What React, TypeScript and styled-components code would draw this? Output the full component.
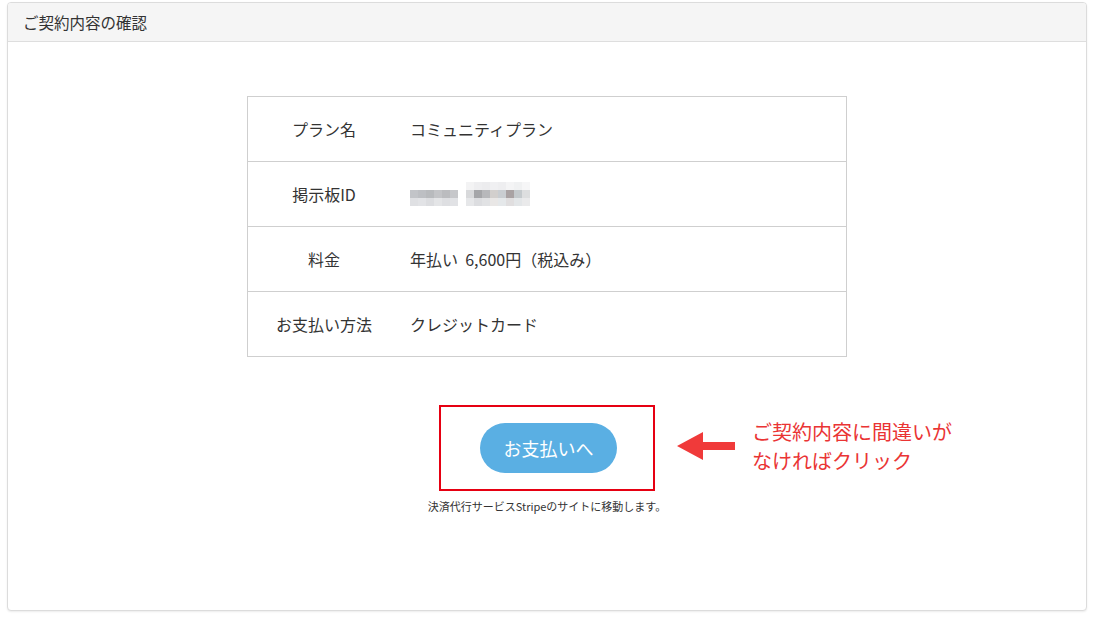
import styled, { createGlobalStyle } from "styled-components";

const GlobalStyle = createGlobalStyle`
  html, body {
    margin: 0;
    padding: 0;
    background: #fff;
  }
  body {
    font-family: "Noto Sans CJK JP", "Noto Sans", sans-serif;
    color: #333;
  }
`;

const rows = [
  { label: "プラン名", value: "コミュニティプラン" },
  { label: "掲示板ID", value: null },
  { label: "料金", value: "年払い\u00a0 6,600円（税込み）" },
  { label: "お支払い方法", value: "クレジットカード" },
];

// blurred board id, mosaic cells (8px each)
const mosaicA = [
  ["#c2c4c8", "#bdbfc3", "#b8babd", "#c3c4c7", "#bbbcbf", "#c6c7ca"],
  ["#dfe0e3", "#e2e3e6", "#dcdde0", "#e4e5e7", "#dedfe2", "#e1e2e5"],
];
const mosaicB = [
  ["#f3f3f4", "#eeeef0", "#ececee", "#f0f0f2", "#eeeef0", "#f4f4f5", "#f0f1f2", "#f6f6f7"],
  ["#d8d9db", "#a5a6a9", "#b7b8bb", "#d2cfcd", "#c9cdd1", "#a9a2a3", "#c4c9cc", "#dddedf"],
  ["#e6e7e9", "#dcdde0", "#e1e2e4", "#e9e7e6", "#e5e8ea", "#e0dedf", "#e3e6e8", "#eaeaeb"],
];

const Mosaic = () => (
  <svg width="124" height="24" viewBox="0 0 124 24">
    {mosaicA.map((r, y) =>
      r.map((c, x) => (
        <rect key={`a${x}-${y}`} x={x * 8} y={8 + y * 8} width="8" height="8" fill={c} />
      ))
    )}
    {mosaicB.map((r, y) =>
      r.map((c, x) => (
        <rect key={`b${x}-${y}`} x={56 + x * 8} y={y * 8} width="8" height="8" fill={c} />
      ))
    )}
  </svg>
);

const App = () => {
  return (
    <Page>
      <GlobalStyle />
      <Card>
        <CardHeader>ご契約内容の確認</CardHeader>
        <CardBody>
          <InfoTable>
            <tbody>
              {rows.map((r) => (
                <tr key={r.label}>
                  <LabelCell>{r.label}</LabelCell>
                  <ValueCell>{r.value ?? <Mosaic />}</ValueCell>
                </tr>
              ))}
            </tbody>
          </InfoTable>
          <ActionArea>
            <Highlight>
              <PayButton>お支払いへ</PayButton>
              <Annotation>
                <svg width="58" height="28" viewBox="0 0 58 28">
                  <polygon points="0,14 26,0 26,10 58,10 58,18 26,18 26,28" fill="#f03a3a" />
                </svg>
                <AnnotationText>
                  ご契約内容に間違いが
                  <br />
                  なければクリック
                </AnnotationText>
              </Annotation>
            </Highlight>
            <Note>決済代行サービスStripeのサイトに移動します。</Note>
          </ActionArea>
        </CardBody>
      </Card>
    </Page>
  );
};

const Page = styled.div`
  padding: 2px 13px 11px 7px;
`;

const Card = styled.div`
  height: 609px;
  box-sizing: border-box;
  display: flex;
  flex-direction: column;
  border: 1px solid #dcdcdc;
  border-radius: 4px;
  background: #fff;
  box-shadow: 0 1px 2px rgba(0, 0, 0, 0.08);
  overflow: hidden;
`;

const CardHeader = styled.div`
  height: 38px;
  line-height: 38px;
  padding-left: 15px;
  background: #f5f5f5;
  border-bottom: 1px solid #dedede;
  font-size: 15.5px;
  color: #333;
`;

const CardBody = styled.div`
  flex: 1;
  display: flex;
  flex-direction: column;
  align-items: center;
  padding-top: 54px;
`;

const InfoTable = styled.table`
  width: 600px;
  border-collapse: collapse;
  border: 1px solid #cfcfcf;
  td {
    border-top: 1px solid #cfcfcf;
    padding-top: 0;
    padding-bottom: 0;
    height: 64px;
    font-size: 16px;
    line-height: 20px;
    color: #333;
  }
`;

const LabelCell = styled.td`
  width: 150px;
  text-align: center;
`;

const ValueCell = styled.td`
  padding-left: 10px;
  svg {
    display: block;
  }
`;

const ActionArea = styled.div`
  display: flex;
  flex-direction: column;
  align-items: center;
  margin-top: 48px;
`;

const Highlight = styled.div`
  position: relative;
  width: 209px;
  height: 82px;
  border: 2px solid #e60012;
  display: flex;
  align-items: center;
  justify-content: center;
  padding-left: 3px;
  box-sizing: content-box;
`;

const PayButton = styled.button`
  width: 137px;
  height: 50px;
  border: none;
  border-radius: 25px;
  background: #5aafe3;
  color: #fff;
  font-family: inherit;
  font-size: 18px;
  cursor: pointer;
`;

const Annotation = styled.div`
  position: absolute;
  left: calc(100% + 24px);
  top: 10px;
  display: flex;
  align-items: center;
  gap: 17px;
  white-space: nowrap;
`;

const AnnotationText = styled.div`
  font-size: 20px;
  line-height: 29px;
  color: #ea3434;
`;

const Note = styled.div`
  margin-top: 7px;
  font-size: 11px;
  line-height: 16px;
  color: #333;
`;

export default App;
